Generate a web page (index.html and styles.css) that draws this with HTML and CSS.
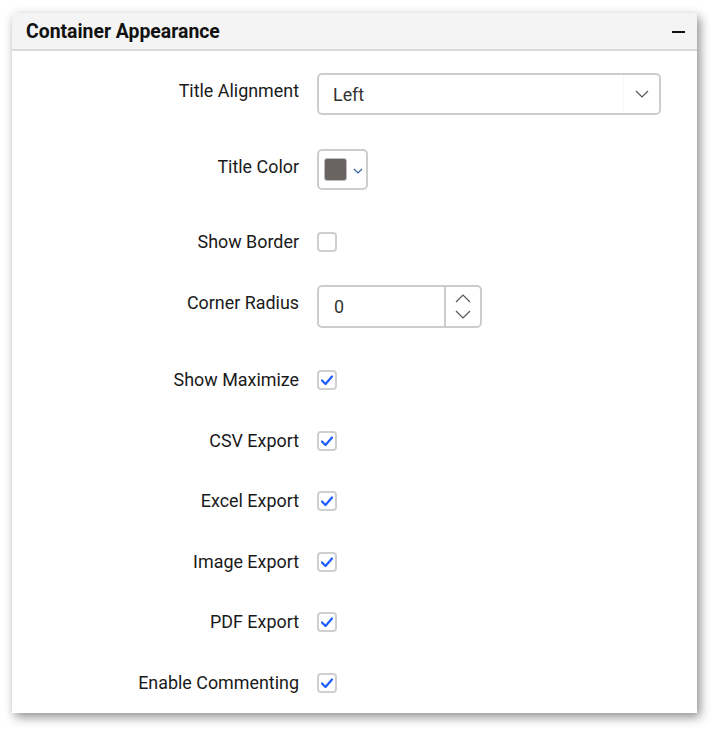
FILE: index.html
```html
<!DOCTYPE html>
<html>
<head>
<meta charset="utf-8">
<link rel="stylesheet" href="styles.css">
</head>
<body>
<div class="panel">
  <div class="header">
    <span class="title">Container Appearance</span>
    <span class="minus"></span>
  </div>
  <div class="content">
    <div class="row row-input r1">
      <div class="label">Title Alignment</div>
      <div class="dropdown">
        <span class="dd-text">Left</span>
        <span class="dd-icon">
          <svg width="14" height="8" viewBox="0 0 14 8"><path d="M1 1 L7 7 L13 1" fill="none" stroke="#555" stroke-width="1.2"/></svg>
        </span>
      </div>
    </div>
    <div class="row row-input r2">
      <div class="label">Title Color</div>
      <div class="colorpicker">
        <span class="swatch"></span>
        <svg class="cp-arrow" width="10" height="6" viewBox="0 0 10 6"><path d="M1 1 L5 5 L9 1" fill="none" stroke="#2f5d9f" stroke-width="1.1"/></svg>
      </div>
    </div>
    <div class="row row-check r3">
      <div class="label">Show Border</div>
      <span class="checkbox"></span>
    </div>
    <div class="row row-input r4">
      <div class="label">Corner Radius</div>
      <div class="numeric">
        <span class="num-text">0</span>
        <span class="spin">
          <svg width="16" height="9" viewBox="0 0 16 9"><path d="M1 8 L8 1 L15 8" fill="none" stroke="#555" stroke-width="1.2"/></svg>
          <svg width="16" height="9" viewBox="0 0 16 9"><path d="M1 1 L8 8 L15 1" fill="none" stroke="#555" stroke-width="1.2"/></svg>
        </span>
      </div>
    </div>
    <div class="row row-check r5">
      <div class="label">Show Maximize</div>
      <span class="checkbox checked"><svg width="14" height="12" viewBox="0 0 14 12"><path d="M2 6.5 L5.5 10 L12 2.5" fill="none" stroke="#1d5cff" stroke-width="2.2" stroke-linecap="round" stroke-linejoin="round"/></svg></span>
    </div>
    <div class="row row-check rc">
      <div class="label">CSV Export</div>
      <span class="checkbox checked"><svg width="14" height="12" viewBox="0 0 14 12"><path d="M2 6.5 L5.5 10 L12 2.5" fill="none" stroke="#1d5cff" stroke-width="2.2" stroke-linecap="round" stroke-linejoin="round"/></svg></span>
    </div>
    <div class="row row-check rc">
      <div class="label">Excel Export</div>
      <span class="checkbox checked"><svg width="14" height="12" viewBox="0 0 14 12"><path d="M2 6.5 L5.5 10 L12 2.5" fill="none" stroke="#1d5cff" stroke-width="2.2" stroke-linecap="round" stroke-linejoin="round"/></svg></span>
    </div>
    <div class="row row-check rc">
      <div class="label">Image Export</div>
      <span class="checkbox checked"><svg width="14" height="12" viewBox="0 0 14 12"><path d="M2 6.5 L5.5 10 L12 2.5" fill="none" stroke="#1d5cff" stroke-width="2.2" stroke-linecap="round" stroke-linejoin="round"/></svg></span>
    </div>
    <div class="row row-check rc">
      <div class="label">PDF Export</div>
      <span class="checkbox checked"><svg width="14" height="12" viewBox="0 0 14 12"><path d="M2 6.5 L5.5 10 L12 2.5" fill="none" stroke="#1d5cff" stroke-width="2.2" stroke-linecap="round" stroke-linejoin="round"/></svg></span>
    </div>
    <div class="row row-check rc">
      <div class="label">Enable Commenting</div>
      <span class="checkbox checked"><svg width="14" height="12" viewBox="0 0 14 12"><path d="M2 6.5 L5.5 10 L12 2.5" fill="none" stroke="#1d5cff" stroke-width="2.2" stroke-linecap="round" stroke-linejoin="round"/></svg></span>
    </div>
  </div>
</div>
</body>
</html>
```
FILE: styles.css
```css
html, body {
  margin: 0;
  padding: 0;
  background: #ffffff;
}
body {
  padding: 13px 0 20px 12px;
  font-family: Roboto, "Liberation Sans", sans-serif;
  color: #1a1a1a;
}
.panel {
  width: 685px;
  height: 700px;
  background: #ffffff;
  box-shadow: 3px 4px 10px rgba(0, 0, 0, 0.45);
  box-sizing: border-box;
}
.header {
  height: 38px;
  background: #f4f4f4;
  border-bottom: 2px solid #dadada;
  box-sizing: border-box;
  display: flex;
  align-items: center;
  justify-content: space-between;
  padding: 0 12px 0 14px;
}
.title {
  font-size: 19.4px;
  font-weight: 700;
  color: #111;
  margin-top: 1px;
}
.minus {
  width: 13px;
  height: 2px;
  background: #111;
  margin-top: 1px;
}
.content {
  padding-top: 22px;
  display: flex;
  flex-direction: column;
}
.row {
  display: flex;
}
.label {
  width: 287px;
  margin-right: 18px;
  text-align: right;
  font-size: 17.9px;
  line-height: 20px;
  color: #1a1a1a;
}
.row-input {
  align-items: flex-start;
}
.row-input .label {
  padding-top: 8px;
}
.row-check {
  align-items: center;
  height: 20px;
}
.r2 { margin-top: 34px; }
.r3 { margin-top: 42px; }
.r4 { margin-top: 33px; }
.r5 { margin-top: 42px; }
.rc { margin-top: 40.5px; }

.dropdown {
  width: 344px;
  height: 42px;
  border: 2px solid #cdcdcd;
  border-radius: 5px;
  box-sizing: border-box;
  display: flex;
  align-items: center;
}
.dd-text {
  flex: 1;
  padding-left: 14px;
  font-size: 17.9px;
  color: #333;
}
.dd-icon {
  width: 35px;
  height: 100%;
  border-left: 1px solid #f7f7f7;
  display: flex;
  align-items: center;
  justify-content: center;
}
.colorpicker {
  width: 51px;
  height: 41px;
  border: 2px solid #cdcdcd;
  border-radius: 5px;
  box-sizing: border-box;
  display: flex;
  align-items: center;
  padding-left: 5px;
}
.swatch {
  width: 23px;
  height: 23px;
  background: #6b6262;
  border: 1px solid #bdbdbd;
  border-radius: 3px;
  box-sizing: border-box;
}
.cp-arrow {
  margin-left: 6px;
  margin-top: 3px;
}
.checkbox {
  width: 20px;
  height: 20px;
  border: 2px solid #cfcfcf;
  border-radius: 4px;
  box-sizing: border-box;
  display: flex;
  align-items: center;
  justify-content: center;
}
.numeric {
  width: 165px;
  height: 43px;
  border: 2px solid #cdcdcd;
  border-radius: 5px;
  box-sizing: border-box;
  display: flex;
  align-items: center;
}
.num-text {
  flex: 1;
  padding-left: 15px;
  font-size: 17.9px;
  color: #333;
}
.spin {
  width: 34px;
  height: 100%;
  border-left: 2px solid #cdcdcd;
  display: flex;
  flex-direction: column;
  align-items: center;
  justify-content: center;
  gap: 7px;
}
```
